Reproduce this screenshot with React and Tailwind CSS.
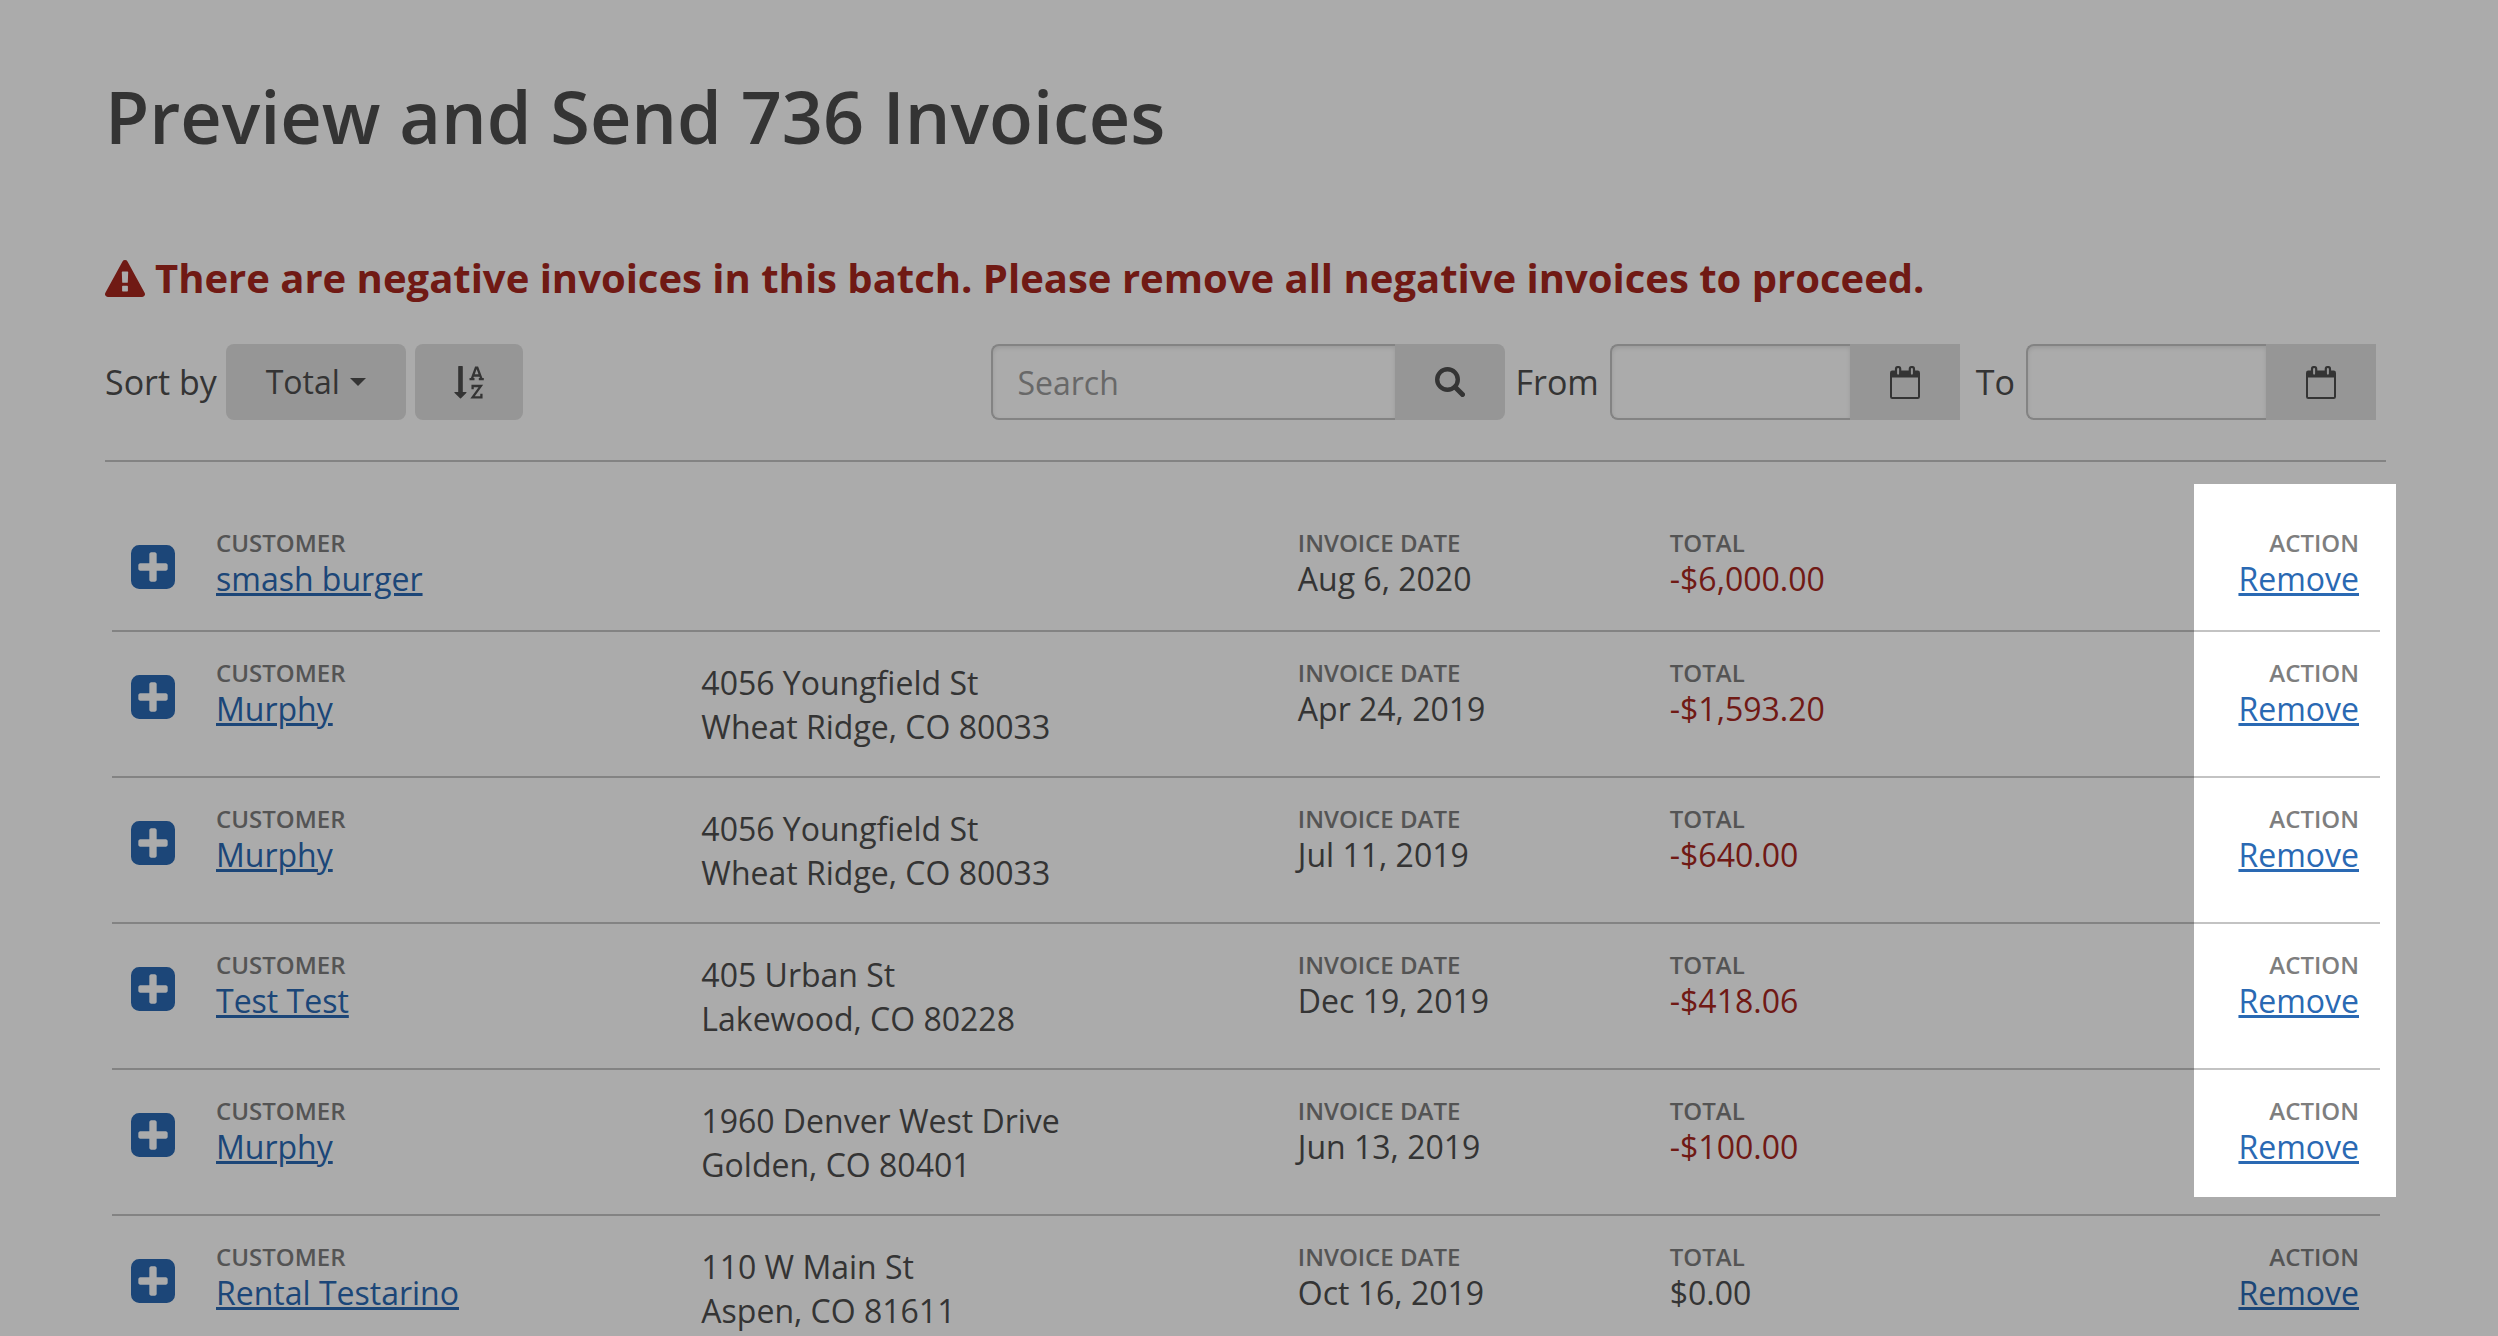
import { useState } from 'react';

const INVOICES = [
    { id: 1, customer: 'smash burger', address: [], date: 'Aug 6, 2020', total: '-$6,000.00' },
    { id: 2, customer: 'Murphy', address: ['4056 Youngfield St', 'Wheat Ridge, CO 80033'], date: 'Apr 24, 2019', total: '-$1,593.20' },
    { id: 3, customer: 'Murphy', address: ['4056 Youngfield St', 'Wheat Ridge, CO 80033'], date: 'Jul 11, 2019', total: '-$640.00' },
    { id: 4, customer: 'Test Test', address: ['405 Urban St', 'Lakewood, CO 80228'], date: 'Dec 19, 2019', total: '-$418.06' },
    { id: 5, customer: 'Murphy', address: ['1960 Denver West Drive', 'Golden, CO 80401'], date: 'Jun 13, 2019', total: '-$100.00' },
    { id: 6, customer: 'Rental Testarino', address: ['110 W Main St', 'Aspen, CO 81611'], date: 'Oct 16, 2019', total: '$0.00' },
];

function WarningIcon() {
    return (
        <svg viewBox="0 0 40 37" className="w-10 h-[37px] shrink-0" fill="currentColor" aria-hidden="true">
            <path
                fillRule="evenodd"
                d="M22.5 1.4 39.6 32.8Q40.4 34.2 39.6 35.6 38.8 37 37.1 37H2.9Q1.2 37 .4 35.6-.4 34.2.4 32.8L17.5 1.4Q18.3 0 20 0T22.5 1.4ZM22.9 30.8V26.5Q22.9 25.8 22.2 25.8H17.8Q17.1 25.8 17.1 26.5V30.8Q17.1 31.5 17.8 31.5H22.2Q22.9 31.5 22.9 30.8ZM22.8 22.3 23.2 12.1Q23.2 11.4 22.5 11.4H17.5Q16.8 11.4 16.8 12.1L17.2 22.3Q17.2 22.8 17.9 22.8H22.1Q22.8 22.8 22.8 22.3Z"
            />
        </svg>
    );
}

function SortAlphaIcon() {
    return (
        <svg viewBox="0 0 30 33" className="w-[30px] h-[33px]" aria-hidden="true">
            <path fill="currentColor" d="M4.2.6Q4.2 0 4.8 0H8.2Q8.8 0 8.8.6V26H12Q12.7 26 12.5 26.7L7 32.2Q6.5 32.6 6 32.2L.4 26.7Q.1 26 .8 26H4.2Z" />
            <path fill="none" stroke="currentColor" strokeWidth="2.3" d="M15.5 13.2H20.5M24.8 13.2H29.8M17.8 13 21.9 1.6H23.3L27.5 13M19.3 9.5H26" />
            <path fill="none" stroke="currentColor" strokeWidth="2.3" d="M18.6 23.2V20H26.9L18.6 31.4H27.4V27.8" />
        </svg>
    );
}

function SearchIcon() {
    return (
        <svg viewBox="0 0 30 30" className="w-[30px] h-[30px]" fill="none" stroke="currentColor" aria-hidden="true">
            <circle cx="12.5" cy="12.5" r="10.3" strokeWidth="4.4" />
            <path d="M20 20 27.5 27.5" strokeWidth="5" strokeLinecap="round" />
        </svg>
    );
}

function CalendarIcon() {
    return (
        <svg viewBox="0 0 30 33" className="w-[30px] h-[33px]" aria-hidden="true">
            <path
                fill="currentColor"
                fillRule="evenodd"
                d="M2.3 4.6H4.9V3Q4.9 0 7.5 0H8.7Q11.3 0 11.3 3V4.6H18.7V3Q18.7 0 21.3 0H22.5Q25.1 0 25.1 3V4.6H27.7Q30 4.6 30 7V30.7Q30 33 27.7 33H2.3Q0 33 0 30.7V7Q0 4.6 2.3 4.6ZM2 11.6V31H28V11.6ZM7.1 3.2V7.6Q7.1 8.7 8.1 8.7T9.1 7.6V3.2Q9.1 2.1 8.1 2.1T7.1 3.2ZM20.9 3.2V7.6Q20.9 8.7 21.9 8.7T22.9 7.6V3.2Q22.9 2.1 21.9 2.1T20.9 3.2Z"
            />
        </svg>
    );
}

function PlusSquareIcon() {
    return (
        <svg viewBox="0 0 1536 1536" className="w-11 h-11" fill="currentColor" aria-hidden="true">
            <path
                fillRule="evenodd"
                d="M1280 832V704q0-26-19-45t-45-19H896V320q0-26-19-45t-45-19H704q-26 0-45 19t-19 45v320H320q-26 0-45 19t-19 45v128q0 26 19 45t45 19h320v320q0 26 19 45t45 19h128q26 0 45-19t19-45V896h320q26 0 45-19t19-45zM1536 288v960q0 119-84.500 203.500T1248 1536H288q-119 0-203.500-84.500T0 1248V288Q0 169 84.500 84.500T288 0h960q119 0 203.500 84.500T1536 288z"
            />
        </svg>
    );
}

function DateField({ id, label }) {
    return (
        <div className="flex items-center">
            <label htmlFor={id} className="mr-[11px]">{label}</label>
            <input
                id={id}
                type="text"
                className="w-60 h-19 px-6 rounded-l-lg border-2 border-r-0 border-[#c3c3c3] shadow-[inset_0_2px_4px_rgba(0,0,0,0.1)] text-[32px]"
            />
            <button type="button" aria-label={`Pick ${label} date`} className="w-[110px] h-19 flex items-center justify-center bg-[#e0e0e0]">
                <CalendarIcon />
            </button>
        </div>
    );
}

function Label({ children }) {
    return <div className="text-2xl leading-8 font-semibold uppercase text-[#7e7e7e]">{children}</div>;
}

function InvoiceRow({ invoice, onRemove }) {
    const negative = invoice.total.startsWith('-');

    return (
        <tr className={invoice.address.length ? 'h-[146px] align-top' : 'h-[130px] align-top'}>
            <td className="border-b-2 border-[#c3c3c3] pl-[19px] pt-[43px]">
                <button type="button" aria-label="Expand invoice" className="block text-[#2a69b3]">
                    <PlusSquareIcon />
                </button>
            </td>
            <td className="border-b-2 border-[#c3c3c3] pt-[25px]">
                <Label>Customer</Label>
                <a href="#" className="text-[#2a69b3] underline">{invoice.customer}</a>
            </td>
            <td className="border-b-2 border-[#c3c3c3] pt-[29px]">
                {invoice.address.map((line) => (
                    <div key={line} className="leading-11">{line}</div>
                ))}
            </td>
            <td className="border-b-2 border-[#c3c3c3] pt-[25px]">
                <Label>Invoice Date</Label>
                {invoice.date}
            </td>
            <td className="border-b-2 border-[#c3c3c3] pt-[25px]">
                <Label>Total</Label>
                <span className={negative ? 'text-[#a7271e]' : ''}>{invoice.total}</span>
            </td>
            <td className="border-b-2 border-[#c3c3c3] pt-[25px] pr-[21px] text-right">
                <Label>Action</Label>
                <a href="#" onClick={onRemove} className="text-[#2a69b3] underline">Remove</a>
            </td>
        </tr>
    );
}

export default function App() {
    const [invoices, setInvoices] = useState(INVOICES);

    const remove = (e, id) => {
        e.preventDefault();
        setInvoices(invoices.filter((invoice) => invoice.id !== id));
    };

    return (
        <div className="h-screen overflow-hidden bg-white pl-[105px] pr-28 pt-[66px] font-['Open_Sans',sans-serif] text-[34px] text-[#4e4e4e]">
            <h1 className="text-7xl leading-[100px] font-semibold">Preview and Send 736 Invoices</h1>

            <p className="mt-[82px] flex items-center gap-2.5 text-[40px] leading-[60px] font-bold text-[#a7271e]">
                <WarningIcon />
                There are negative invoices in this batch. Please remove all negative invoices to proceed.
            </p>

            {/* Toolbar */}
            <div className="mt-9 flex items-center justify-between border-b-2 border-[#c3c3c3] pb-10 pr-2.5">
                <div className="flex items-center gap-[9px]">
                    <span>Sort by</span>
                    <button type="button" className="w-45 h-19 flex items-center justify-center gap-2.5 rounded-lg bg-[#e0e0e0] text-[32px]">
                        Total
                        <svg viewBox="0 0 16 8" className="w-4 h-2" fill="currentColor" aria-hidden="true"><path d="M0 0H16L8 8Z" /></svg>
                    </button>
                    <button type="button" aria-label="Sort direction" className="w-27 h-19 flex items-center justify-center rounded-lg bg-[#e0e0e0]">
                        <SortAlphaIcon />
                    </button>
                </div>
                <div className="flex items-center">
                    <div className="mr-2.5 flex">
                        <input
                            type="text"
                            aria-label="Search"
                            placeholder="Search"
                            className="w-101 h-19 px-6 rounded-l-lg border-2 border-r-0 border-[#c3c3c3] shadow-[inset_0_2px_4px_rgba(0,0,0,0.1)] text-[32px] placeholder:text-[#9c9c9c]"
                        />
                        <button type="button" aria-label="Search" className="w-[110px] h-19 flex items-center justify-center rounded-r-lg bg-[#e0e0e0]">
                            <SearchIcon />
                        </button>
                    </div>
                    <DateField id="from" label="From" />
                    <div className="w-4" />
                    <DateField id="to" label="To" />
                </div>
            </div>

            <div className="relative mt-10 ml-[7px] mr-1.5">
                <table className="w-full table-fixed border-separate border-spacing-0 text-[32px] leading-10">
                    <colgroup>
                        <col className="w-26" />
                        <col className="w-[21.4%]" />
                        <col className="w-[26.3%]" />
                        <col className="w-[16.4%]" />
                        <col className="w-[16.4%]" />
                        <col />
                    </colgroup>
                    <tbody>
                        {invoices.map((invoice) => (
                            <InvoiceRow key={invoice.id} invoice={invoice} onRemove={(e) => remove(e, invoice.id)} />
                        ))}
                    </tbody>
                </table>
                {/* Spotlight: everything outside this box is dimmed */}
                <div className="pointer-events-none absolute -top-[18px] -right-4 w-[202px] h-[713px] shadow-[0_0_0_3000px_rgba(0,0,0,0.33)]"></div>
            </div>
        </div>
    );
}
